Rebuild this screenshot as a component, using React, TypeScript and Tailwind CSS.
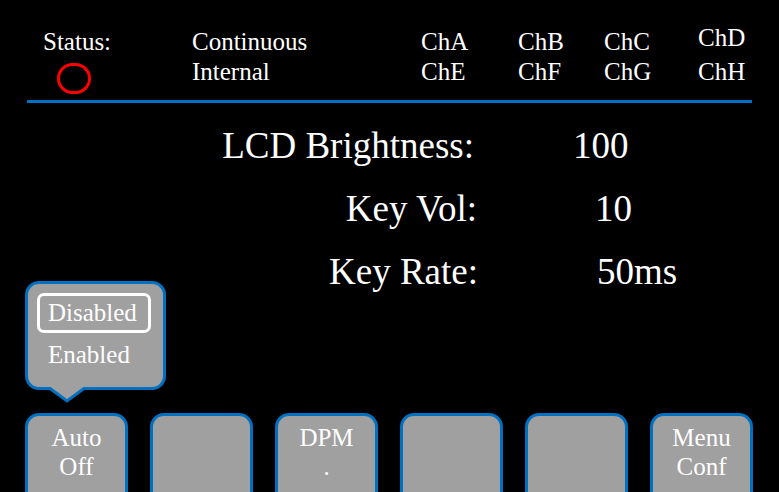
import React from "react";

const Btn = ({ l1, l2 }: { l1?: string; l2?: string }) => (
  <div className="w-[103px] h-[92px] shrink-0 border-[3px] border-[#0070c0] rounded-t-[14px] bg-[#a0a0a0] pt-[7px] text-center text-white text-[25px] leading-[29px]">
    <div className="h-[29px]">{l1}</div>
    <div className="h-[29px]">{l2}</div>
  </div>
);

export default function App() {
  return (
    <div className="relative w-[779px] h-[492px] overflow-hidden bg-black text-white font-['Liberation_Serif',serif]">
      {/* header */}
      <div className="flex items-start h-[73px] pt-[27px] pl-[43px] text-[25px] leading-[30px]">
        <div className="w-[149px] flex flex-col">
          <div className="h-[30px]">Status:</div>
          <div className="shrink-0 ml-[14px] mt-[6px] w-[34px] h-[31px] rounded-full border-[3px] border-[#ff0000]" />
        </div>
        <div className="w-[229px] flex flex-col">
          <div>Continuous</div>
          <div>Internal</div>
        </div>
        <div className="w-[97px] flex flex-col">
          <div>ChA</div>
          <div>ChE</div>
        </div>
        <div className="w-[86px] flex flex-col">
          <div>ChB</div>
          <div>ChF</div>
        </div>
        <div className="w-[94px] flex flex-col">
          <div>ChC</div>
          <div>ChG</div>
        </div>
        <div className="flex flex-col -mt-[4px]">
          <div className="h-[34px]">ChD</div>
          <div>ChH</div>
        </div>
      </div>
      <div className="h-[3px] w-[725px] ml-[27px] mt-[27px] bg-[#0070c0]" />

      {/* settings */}
      <div className="mt-[11px] text-[37px] leading-[63px]">
        <div className="flex">
          <div className="w-[474px] text-right">LCD Brightness:</div>
          <div className="ml-[99px]">100</div>
        </div>
        <div className="flex">
          <div className="w-[477px] text-right">Key Vol:</div>
          <div className="ml-[118px]">10</div>
        </div>
        <div className="flex">
          <div className="w-[478px] text-right">Key Rate:</div>
          <div className="ml-[119px]">50ms</div>
        </div>
      </div>

      {/* buttons */}
      <div className="flex gap-[22px] pl-[25px] mt-[110px]">
        <Btn l1="Auto" l2="Off" />
        <Btn />
        <Btn l1="DPM" l2="." />
        <Btn />
        <Btn />
        <Btn l1="Menu" l2="Conf" />
      </div>

      {/* popup */}
      <div className="absolute left-[25px] top-[281px] w-[141px] h-[109px] border-[3px] border-[#0070c0] rounded-[14px] bg-[#a0a0a0] text-[25px] leading-[28px]">
        <div className="ml-[9px] mt-[9px] w-[114px] h-[40px] border-[3px] border-white rounded-[7px] pl-[8px] pt-[3px]">
          Disabled
        </div>
        <div className="pl-[20px] mt-[8px]">Enabled</div>
      </div>
      <svg className="absolute left-[46px] top-[386px]" width="42" height="20" viewBox="0 0 42 20">
        <polygon points="5,0 37,0 37,2.5 21,14.5 5,2.5" fill="#a0a0a0" />
        <polyline points="4,2.5 21,15 38,2.5" fill="none" stroke="#0070c0" strokeWidth="3" strokeLinejoin="miter" />
      </svg>
    </div>
  );
}
